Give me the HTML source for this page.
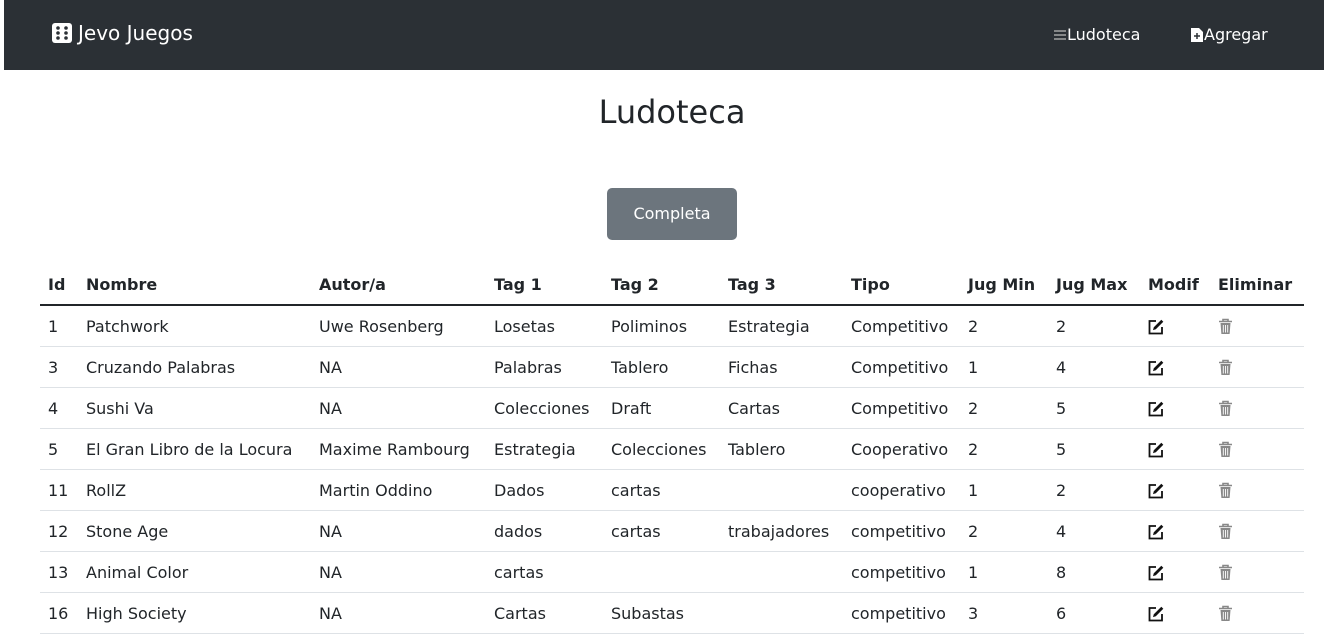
<!DOCTYPE html>
<html><head><meta charset="utf-8"><style>
*{box-sizing:border-box;margin:0;padding:0}
body{width:1324px;height:616px;overflow:hidden;background:#fff;font-family:"DejaVu Sans","Liberation Sans",sans-serif;color:#212529;font-size:16px}
.nav{position:absolute;left:4px;top:0;width:1320px;height:70px;background:#2b3035;color:#fff}
.brand{position:absolute;left:48px;top:21px;font-size:20px;display:flex;align-items:center;gap:6px}
.link{position:absolute;top:24px;font-size:16px;display:flex;align-items:center}
h1{position:absolute;top:90px;left:10px;width:1324px;text-align:center;font-weight:400;font-size:32px;line-height:44px}
.btn{position:absolute;left:607px;top:188px;width:130px;height:52px;background:#6c757d;color:#fff;border-radius:5px;text-align:center;line-height:52px;font-size:16px}
table{position:absolute;left:40px;top:264px;width:1264px;border-collapse:collapse}
th,td{text-align:left;padding:0 8px;height:41px;white-space:nowrap}
th{font-weight:700;border-bottom:2px solid #212529;height:41px}
td{border-bottom:1px solid #dee2e6;padding-top:2px}
td svg{vertical-align:middle;display:block}
</style></head><body>
<div class="nav">
<div class="brand"><svg width="20" height="20" viewBox="0 0 20 20"><rect x="0" y="0" width="20" height="20" rx="3" fill="#fff"/><g fill="#2b3035"><circle cx="6" cy="5" r="1.8"/><circle cx="14" cy="5" r="1.8"/><circle cx="6" cy="10" r="1.8"/><circle cx="14" cy="10" r="1.8"/><circle cx="6" cy="15" r="1.8"/><circle cx="14" cy="15" r="1.8"/></g></svg>Jevo Juegos</div>
<div class="link" style="left:1049px;top:25px"><svg width="14" height="12" viewBox="0 0 14 12"><path d="M1 2h12M1 6h12M1 10h12" stroke="#bbb" stroke-width="1.3"/></svg>Ludoteca</div>
<div class="link" style="left:1186px;top:25px"><svg width="14" height="16" viewBox="0 0 14 16"><path d="M1 1h8l4 4v10H1z" fill="#fff"/><path d="M7 6v6M4 9h6" stroke="#2b3035" stroke-width="1.5"/></svg>Agregar</div>
</div>
<h1>Ludoteca</h1>
<div class="btn">Completa</div>
<table>
<colgroup><col style="width:38px"><col style="width:233px"><col style="width:175px"><col style="width:117px"><col style="width:117px"><col style="width:123px"><col style="width:117px"><col style="width:88px"><col style="width:92px"><col style="width:70px"><col style="width:94px"></colgroup>
<tr><th>Id</th><th>Nombre</th><th>Autor/a</th><th>Tag 1</th><th>Tag 2</th><th>Tag 3</th><th>Tipo</th><th>Jug Min</th><th>Jug Max</th><th>Modif</th><th>Eliminar</th></tr>
<tr><td>1</td><td>Patchwork</td><td>Uwe Rosenberg</td><td>Losetas</td><td>Poliminos</td><td>Estrategia</td><td>Competitivo</td><td>2</td><td>2</td><td>E</td><td>D</td></tr>
<tr><td>3</td><td>Cruzando Palabras</td><td>NA</td><td>Palabras</td><td>Tablero</td><td>Fichas</td><td>Competitivo</td><td>1</td><td>4</td><td>E</td><td>D</td></tr>
<tr><td>4</td><td>Sushi Va</td><td>NA</td><td>Colecciones</td><td>Draft</td><td>Cartas</td><td>Competitivo</td><td>2</td><td>5</td><td>E</td><td>D</td></tr>
<tr><td>5</td><td>El Gran Libro de la Locura</td><td>Maxime Rambourg</td><td>Estrategia</td><td>Colecciones</td><td>Tablero</td><td>Cooperativo</td><td>2</td><td>5</td><td>E</td><td>D</td></tr>
<tr><td>11</td><td>RollZ</td><td>Martin Oddino</td><td>Dados</td><td>cartas</td><td></td><td>cooperativo</td><td>1</td><td>2</td><td>E</td><td>D</td></tr>
<tr><td>12</td><td>Stone Age</td><td>NA</td><td>dados</td><td>cartas</td><td>trabajadores</td><td>competitivo</td><td>2</td><td>4</td><td>E</td><td>D</td></tr>
<tr><td>13</td><td>Animal Color</td><td>NA</td><td>cartas</td><td></td><td></td><td>competitivo</td><td>1</td><td>8</td><td>E</td><td>D</td></tr>
<tr><td>16</td><td>High Society</td><td>NA</td><td>Cartas</td><td>Subastas</td><td></td><td>competitivo</td><td>3</td><td>6</td><td>E</td><td>D</td></tr>
</table>
<script>
var E='<svg width="16" height="16" viewBox="0 0 16 16"><path d="M8 2H1.5v12.5H14V8" fill="none" stroke="#111" stroke-width="1.8"/><path d="M13.3 0.8l2 2-7.5 7.5-2.8.8.8-2.8z" fill="#111"/></svg>';
var D='<svg width="15" height="17" viewBox="0 0 15 17"><path d="M1 3.5h13M5 3.5V1.5h5v2" stroke="#888" stroke-width="1.6" fill="none"/><path d="M2.5 5h10l-.9 11H3.4z" fill="#888"/><path d="M5.3 7v7.5M7.5 7v7.5M9.7 7v7.5" stroke="#fff" stroke-width=".9"/></svg>';
document.querySelectorAll('td').forEach(function(t){if(t.textContent==='E')t.innerHTML=E;else if(t.textContent==='D')t.innerHTML=D;});
</script>
</body></html>
